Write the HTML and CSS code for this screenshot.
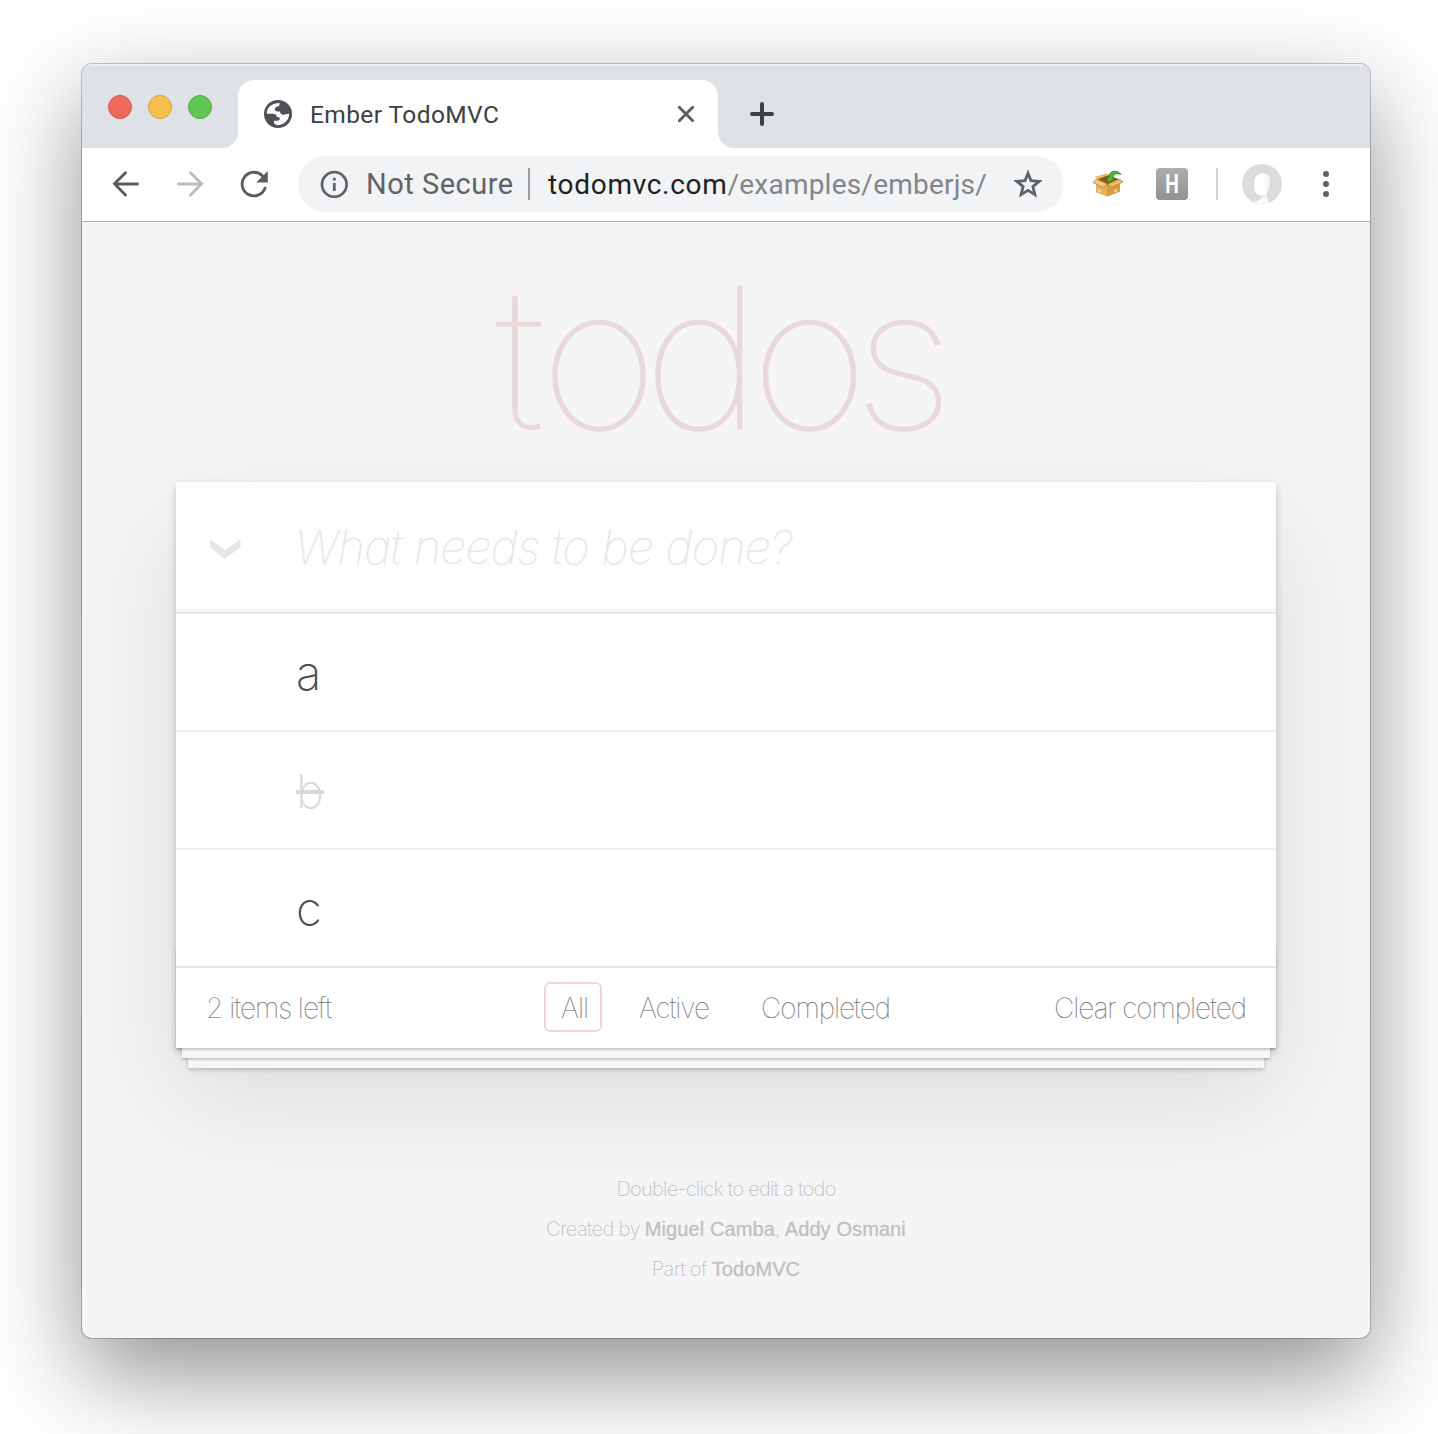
FILE: index.html
```html
<!DOCTYPE html>
<html lang="en">
<head>
<meta charset="utf-8">
<title>Ember TodoMVC</title>
<link rel="stylesheet" href="styles.css">
</head>
<body>
<div class="window">
  <div class="tabstrip">
    <div class="lights"><i class="light red"></i><i class="light yellow"></i><i class="light green"></i></div>
    <div class="tab">
      <svg class="globe" width="28" height="28" viewBox="0 0 28 28"><circle cx="14" cy="14" r="14" fill="#4d5156"/><path d="M2.800 13.800C2.800 8 7 3.200 15.500 3.100V4.300C15.500 6 14.500 6.500 13.200 6.700C11.500 7 10.800 8 10.800 9.300C10.800 10.800 12 11.400 13.500 11.400H16C16.300 13.500 17.500 14.700 19.500 14.700C21.500 14.700 22 13.800 25.200 13.800C25.200 20 20 25.200 13.500 25.200C11.500 25 10 24 10 22.300V20.800H13C15 20.800 15.800 20 15.800 18.600C15.800 17.400 14.500 17 12.800 17C12.500 15 11.500 13.800 9 13.800Z" fill="#fff"/></svg>
      <span class="tab-title">Ember TodoMVC</span>
      <svg class="close" width="16" height="16" viewBox="0 0 16 16"><path d="M1.300 1.300l13.400 13.400M14.700 1.300L1.300 14.700" stroke="#5a5d61" stroke-width="2.900" stroke-linecap="round"/></svg>
    </div>
    <svg class="plus" width="24" height="24" viewBox="0 0 24 24"><path d="M12 2v20M2 12h20" stroke="#3c4043" stroke-width="4" stroke-linecap="round"/></svg>
  </div>
  <div class="toolbar">
    <svg class="nav" width="28" height="28" viewBox="0 0 28 28"><path d="M25.500 14H3M13.500 2.700L2.500 13.700L13.500 25" fill="none" stroke="#5a5e63" stroke-width="2.900" stroke-linecap="round"/></svg>
    <svg class="nav" width="28" height="28" viewBox="0 0 28 28"><path d="M2.500 14H25M14.500 2.700l11 11L14.500 25" fill="none" stroke="#b9bbbd" stroke-width="2.900" stroke-linecap="round"/></svg>
    <svg class="nav" width="28" height="28" viewBox="0 0 28 28"><path d="M25 18.200A11.800 11.800 0 1 1 22.400 5.800" fill="none" stroke="#5a5e63" stroke-width="2.900" stroke-linecap="round"/><path d="M27.800 1v11.600H16.200z" fill="#5a5e63"/></svg>
    <div class="omnibox">
      <svg width="28" height="28" viewBox="0 0 28 28"><circle cx="14.300" cy="14.500" r="12.300" fill="none" stroke="#5f6368" stroke-width="2.700"/><path d="M14.300 13v8M14.300 7.800v2.800" stroke="#5f6368" stroke-width="2.800"/></svg>
      <span class="secure">Not Secure</span>
      <span class="bar"></span>
      <span class="url"><b>todomvc.com</b>/examples/emberjs/</span>
      <svg class="star" width="30" height="30" viewBox="0 0 30 30"><path d="M15 4.200l2.900 7.400l8.300.7l-6.300 5.300l2 8L15 21.400l-6.900 4.200l2-8l-6.300-5.300l8.300-.7z" fill="none" stroke="#5f6368" stroke-width="2.800"/></svg>
    </div>
    <svg class="box" width="32" height="28" viewBox="0 0 32 28"><path d="M4 10l12-5 12 5v11l-13 5.500L4 22z" fill="#d99a44"/><path d="M5 9.500L16 5l11.500 4.500L16 14.500z" fill="#8d5a20"/><path d="M4 12l11 3v11.500L4 22z" fill="#e8b05a"/><path d="M15 15l13-3v9.500l-13 5z" fill="#dc9b43"/><path d="M4.500 9L15 14 11.500 18 1 12.500z" fill="#f3c67c" stroke="#bd7f32" stroke-width=".8"/><path d="M27.500 9L31 12l-11 5-5-2.500z" fill="#f0bd6d" stroke="#bd7f32" stroke-width=".8"/><path d="M5 9L2.500 7 15 3.500 17 5z" fill="#e9b463"/><path d="M6 19l3 1v2.500l-3-1zM22 20l3-1v2.500l-3 1z" fill="#f6d79b"/><path d="M29 4.500C26-.5 17 0 17 7l-2 .5L15.800 13l7-4.500-2-.7C21 4.500 24 2.500 29 4.500z" fill="#58b53c" stroke="#26801d" stroke-width=".8"/></svg>
    <div class="ext"><span>H</span></div>
    <span class="divider"></span>
    <svg class="avatar" width="40" height="40" viewBox="0 0 40 40"><defs><clipPath id="round"><circle cx="20" cy="20" r="20"/></clipPath><linearGradient id="face"><stop offset=".6" stop-color="#fff"/><stop offset="1" stop-color="#e8edf2"/></linearGradient></defs><circle cx="20" cy="20" r="20" fill="#dcdcdc"/><g clip-path="url(#round)"><path d="M21 28c1 6-2 8.500-10 10v2h17c-3-4-3.500-7-2.500-13z" fill="#f8fafc"/><path d="M20.500 8.800c6.500 0 9 4.200 8.300 10.200c-.5 5.500-2 9-4.500 12.500c-5 2-12.500 0-12.800-8.500C11 14 14 8.800 20.500 8.800z" fill="url(#face)" stroke="#cdd2d7" stroke-width=".8"/></g></svg>
    <svg class="menu" width="6" height="26" viewBox="0 0 6 26"><g fill="#5f6368"><circle cx="3" cy="3" r="3"/><circle cx="3" cy="13" r="3"/><circle cx="3" cy="23" r="3"/></g></svg>
  </div>
  <main class="page">
    <h1><span class="kern-t">t</span>o<span class="kern-d">d</span>os</h1>
    <section class="todoapp">
      <header class="new-todo">
        <svg class="chevron" width="32" height="20" viewBox="0 0 32 20"><path d="M1 0l15 11.500L31.500 0v8L16 20 1 8z" fill="#e6e6e6"/></svg>
        <span class="placeholder">What needs to be done?</span>
      </header>
      <ul class="list">
        <li>a</li>
        <li class="done"><s>b</s></li>
        <li>c</li>
      </ul>
      <footer class="footer">
        <span class="count">2 items left</span>
        <nav class="filters"><a class="selected">All</a><a class="active">Active</a><a class="completed">Completed</a></nav>
        <span class="clear">Clear completed</span>
      </footer>
    </section>
    <div class="info">
      <p class="hint">Double-click to edit a todo</p>
      <p class="authors">Created by <b>Miguel Camba</b>, <b>Addy Osmani</b></p>
      <p class="part">Part of <b>TodoMVC</b></p>
    </div>
  </main>
</div>
</body>
</html>
```
FILE: styles.css
```css
* { box-sizing: border-box; }
html { overflow: hidden; background: #fff; }
body { margin: 0; padding: 64px 68px 96px 82px; height: 1434px; overflow: hidden; font-family: Inter, "Liberation Sans", sans-serif; }
svg { display: block; flex: none; }
.window { width: 1288px; height: 1274px; border-radius: 10px; overflow: hidden; background: #f5f5f5; display: flex; flex-direction: column; box-shadow: 0 0 0 1px rgba(0,0,0,.22), 0 36px 96px rgba(0,0,0,.44); }
.tabstrip { height: 84px; flex: none; background: #dee1e6; box-shadow: inset 0 2px 0 #edeff1; display: flex; align-items: flex-end; }
.lights { width: 156px; height: 84px; padding: 31px 0 0 26px; display: flex; gap: 16px; }
.light { width: 24px; height: 24px; border-radius: 50%; border: 1px solid; }
.red { background: #ee6a5f; border-color: #d5544b; }
.yellow { background: #f5bf4f; border-color: #d9a13c; }
.green { background: #62c655; border-color: #4dab40; }
.tab { position: relative; width: 480px; height: 68px; padding: 0 24px 0 26px; background: #fff; border-radius: 16px 16px 0 0; display: flex; align-items: center; }
.tab::before, .tab::after { content: ""; position: absolute; bottom: 0; width: 16px; height: 16px; }
.tab::before { right: 100%; background: radial-gradient(circle at 0 0, transparent 15.500px, #fff 16.500px); }
.tab::after { left: 100%; background: radial-gradient(circle at 100% 0, transparent 15.500px, #fff 16.500px); }
.tab-title { margin-left: 18px; font-family: Roboto, sans-serif; font-size: 24.500px; letter-spacing: .4px; color: #3c4043; white-space: nowrap; }
.close { margin-left: auto; }
.plus { margin: 0 0 22px 32px; }
.toolbar { height: 74px; flex: none; background: #fff; border-bottom: 1px solid #b1b2b4; display: flex; align-items: center; padding: 0 41px 1px 30px; }
.nav { margin-right: 36px; }
.nav:nth-child(3) { margin-right: 30px; }
.omnibox { width: 766px; height: 56px; border-radius: 28px; background: #f1f3f4; display: flex; align-items: center; padding: 0 21px 0 22px; font-family: Roboto, sans-serif; font-size: 28px; white-space: nowrap; color: #80868b; }
.secure { margin-left: 18px; width: 162px; color: #5f6368; font-size: 29px; letter-spacing: .5px; }
.bar { width: 2px; height: 32px; background: #9a9da1; }
.url { margin-left: 18px; letter-spacing: .22px; }
.url b { font-weight: 400; color: #202124; letter-spacing: .7px; }
.star { margin-left: auto; }
.box { margin-left: 28px; }
.ext { margin-left: 32px; width: 32px; height: 32px; border-radius: 4px; background: linear-gradient(#adadad, #919191); color: #fff; font: 700 26px/32px Roboto, sans-serif; text-align: center; }
.ext span { display: block; transform: scaleX(.74); }
.divider { margin-left: 28px; width: 2px; height: 32px; background: #cdcfd1; }
.avatar { margin-left: 24px; }
.menu { margin-left: auto; }
.page { flex: 1; padding: 0 94px; font-weight: 100; }
h1 { margin: 0; height: 260px; padding: 18px 6px 0 0; text-align: center; font-size: 196px; line-height: 236px; font-weight: 100; color: #e9d9d9; letter-spacing: -15px; white-space: nowrap; -webkit-text-stroke: .7px #e9d9d9; transform: translateX(-6px) scaleX(1.045); }
.kern-t { letter-spacing: -4.500px; }
.kern-d { letter-spacing: -11px; }
.todoapp { width: 1100px; background: #fff; box-shadow: 0 4px 8px rgba(0,0,0,.2), 0 50px 100px rgba(0,0,0,.1); }
.new-todo { height: 130px; padding-left: 33px; display: flex; align-items: center; background: #fefefe; box-shadow: inset 0 -4px 2px rgba(0,0,0,.03); }
.chevron { margin-top: 4px; }
.placeholder { margin-left: 54px; font-size: 46.500px; font-style: italic; color: #e6e6e6; letter-spacing: -.55px; white-space: nowrap; -webkit-text-stroke: .4px #e6e6e6; }
.list { margin: 0; padding: 0; list-style: none; border-top: 2px solid #e6e6e6; }
.list li { height: 118px; padding: 0 0 0 120px; line-height: 118px; border-bottom: 2px solid #ededed; font-size: 47px; font-weight: 200; color: #4d4d4d; }
.list li:last-child { height: 116px; border-bottom: 0; }
.list .done { color: #d9d9d9; }
.footer { position: relative; height: 82px; border-top: 2px solid #e6e6e6; padding: 0 30px; display: grid; grid-template-columns: 338px 1fr auto; align-items: center; font-size: 28px; color: #777; white-space: nowrap; -webkit-text-stroke: .2px #777; }
.footer::before { content: ""; position: absolute; left: 0; right: 0; bottom: 0; height: 100px; box-shadow: 0 2px 2px rgba(0,0,0,.2), 0 16px 0 -6px #f6f6f6, 0 18px 2px -6px rgba(0,0,0,.2), 0 32px 0 -12px #f6f6f6, 0 34px 4px -12px rgba(0,0,0,.2); }
.count, .clear { letter-spacing: -1px; }
.filters { display: flex; letter-spacing: -1px; margin-top: -2px; }
.filters a { height: 50px; line-height: 48px; border: 2px solid transparent; border-radius: 6px; }
.filters .selected { width: 58px; padding-left: 15px; border-color: #efd5d5; }
.filters .active { width: 102px; margin-left: 20px; padding-left: 15px; }
.filters .completed { margin-left: 20px; padding-left: 15px; }
.info { margin-top: 121px; text-align: center; color: #bfbfbf; font-size: 20px; font-weight: 200; line-height: 40px; text-shadow: 0 1px 0 rgba(255,255,255,.5); letter-spacing: -.65px; }
.info p { margin: 0; }
.info .hint { letter-spacing: -.75px; }
.info b { font-family: "Liberation Sans", sans-serif; font-weight: 400; letter-spacing: .1px; -webkit-text-stroke: .3px #bfbfbf; }
```
